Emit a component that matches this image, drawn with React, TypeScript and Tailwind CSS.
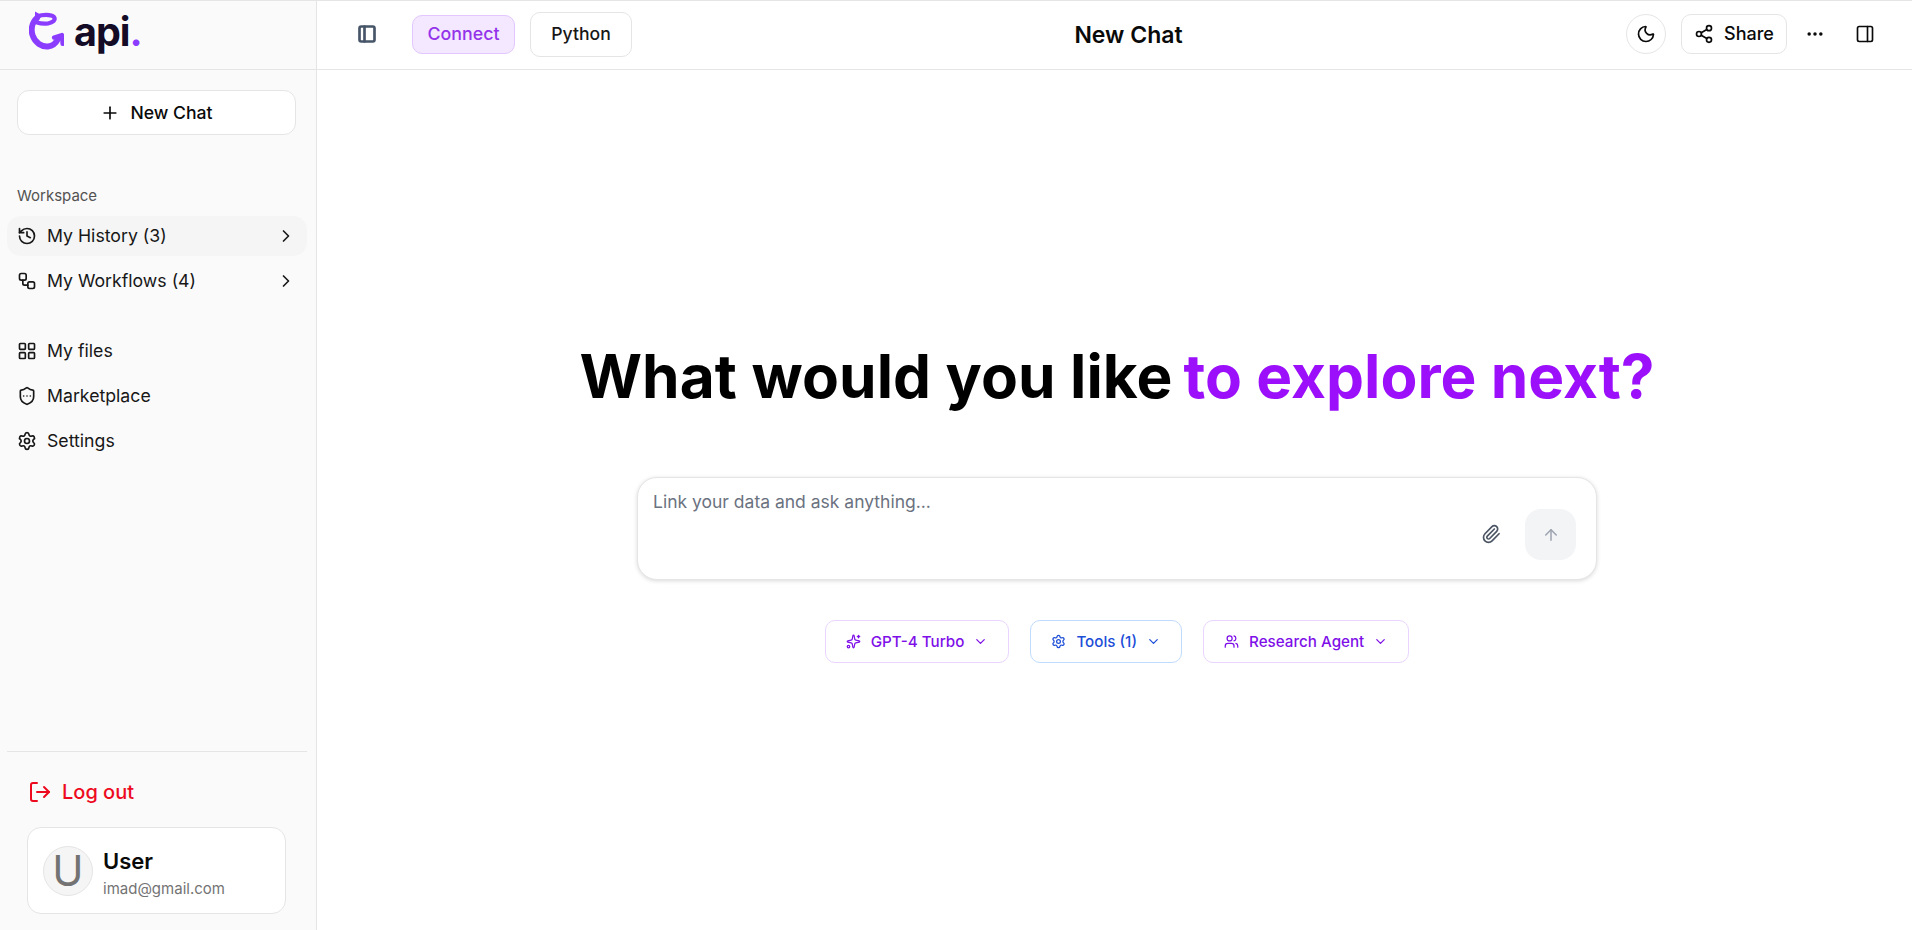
import React from "react";
import {
  History, Workflow, LayoutGrid, ShieldEllipsis, Settings, ChevronRight, ChevronDown, Plus, PanelLeft, PanelRight,
  Moon, Share2, Ellipsis, Paperclip, ArrowUp, Sparkles, Users, LogOut,
} from "lucide-react";

function Logo() {
  return (
    <svg width="35" height="40" viewBox="0 0 35 40" fill="none" className="shrink-0">
      <path d="M6 0.5 L14 5 L6 10 Z" fill="#8b3dff" />
      <path d="M8 7 C2.5 12 2 19 3.5 24 C6 32 13 36 19 35.5 C24 35 27 32 29 28" stroke="#8b3dff" strokeWidth="6" strokeLinecap="round" />
      <path d="M8 5.5 C13 3.5 22 3 25 6 C27 9 24 11.5 19 12.5 C15 13 11 12.5 8 11.5" stroke="#8b3dff" strokeWidth="4.2" strokeLinecap="round" />
      <path d="M25 26.5 L33 24 L33.5 33" stroke="#8b3dff" strokeWidth="4.2" strokeLinecap="round" strokeLinejoin="round" />
    </svg>
  );
}

function NavRow({ icon, label, chevron, active }: { icon: React.ReactNode; label: string; chevron?: boolean; active?: boolean }) {
  return (
    <div className={`flex h-10 items-center rounded-[14px] pl-[10px] pr-[11px] ${active ? "bg-[#f5f5f5]" : ""}`}>
      <span className="flex w-[20px] justify-center text-[#171717]">{icon}</span>
      <span className="ml-[10px] flex-1 text-[17.7px] leading-none text-[#171717]">{label}</span>
      {chevron && <ChevronRight size={20} strokeWidth={2} className="text-[#171717]" />}
    </div>
  );
}

function Chip({ icon, label, tone }: { icon: React.ReactNode; label: string; tone: "purple" | "blue" }) {
  const cls = tone === "blue" ? "border-[#bfdbfe] text-[#1d4ed8]" : "border-[#e9d5ff] text-[#7e0fe8]";
  return (
    <div className={`flex h-[43px] items-center rounded-[10px] border-[1.5px] bg-white pl-[20px] pr-[20px] ${cls}`}>
      {icon}
      <span className="ml-[10px] text-[15.2px] font-medium leading-none">{label}</span>
      <ChevronDown size={15} strokeWidth={2} className="ml-[9px]" />
    </div>
  );
}

export default function App() {
  return (
    <div className="flex h-[930px] w-[1912px] overflow-hidden border-t border-[#e5e5e5] bg-white font-['Inter',sans-serif] text-[#0a0a0a]">
      <aside className="flex w-[317px] shrink-0 flex-col border-r-[1.5px] border-[#e5e5e5] bg-[#fafafa]">
        <div className="flex h-[69px] shrink-0 items-start border-b border-[#e5e5e5] pl-[29px] pt-[10px]">
          <Logo />
          <span className="ml-[10px] mt-[-1px] text-[39.5px] font-bold leading-[44px] tracking-[-1px] text-[#140b26]">
            api<span className="text-[#8b3dff]">.</span>
          </span>
        </div>
        <div className="px-[17px] pt-[20px]">
          <div className="flex h-[45px] w-[279px] items-center justify-center rounded-[12px] border-[1.5px] border-[#e5e5e5] bg-white">
            <Plus size={20} strokeWidth={2} />
            <span className="ml-[10px] mt-[1px] text-[17.6px] font-medium leading-none">New Chat</span>
          </div>
        </div>
        <div className="pl-[17px] pt-[52px] text-[15px] leading-[18px] text-[#525252]">Workspace</div>
        <nav className="flex flex-col gap-[5px] pl-[7px] pr-[9px] pt-[11px]">
          <NavRow active icon={<History size={20} />} label="My History (3)" chevron />
          <NavRow icon={<Workflow size={20} />} label="My Workflows (4)" chevron />
          <div className="h-[20px]" />
          <NavRow icon={<LayoutGrid size={20} />} label="My files" />
          <NavRow icon={<ShieldEllipsis size={20} />} label="Marketplace" />
          <NavRow icon={<Settings size={20} />} label="Settings" />
        </nav>
        <div className="mt-auto pl-[7px] pr-[9px]">
          <div className="border-t-[1.5px] border-[#e5e5e5]" />
        </div>
        <div className="flex items-center pl-[28px] pt-[28px] text-[#ee0a1e]">
          <LogOut size={24} strokeWidth={2} />
          <span className="ml-[10px] text-[20px] font-medium leading-[24px]">Log out</span>
        </div>
        <div className="mx-[27px] mb-[16px] mt-[23px] flex h-[87px] w-[259px] items-center rounded-[14px] border-[1.5px] border-[#e5e5e5] bg-white pl-[15px]">
          <div className="flex h-[50px] w-[50px] items-center justify-center rounded-full border border-[#e5e5e5] bg-[#f5f5f5] text-[42px] leading-none text-[#737373]">U</div>
          <div className="ml-[10px] pt-[5px]">
            <div className="text-[22px] font-semibold leading-[28px]">User</div>
            <div className="mt-[4px] text-[15px] leading-[20px] text-[#737373]">imad@gmail.com</div>
          </div>
        </div>
      </aside>

      <main className="flex min-w-0 flex-1 flex-col">
        <header className="flex h-[69px] shrink-0 items-center border-b border-[#e5e5e5] pb-[2px] pr-[37px]">
          <PanelLeft size={20} strokeWidth={3.2} className="ml-[40px] text-[#475569]" />
          <div className="ml-[35px] flex h-[39px] w-[103px] items-center justify-center rounded-[10px] border-[1.5px] border-[#e2c7fe] bg-[#f3e8ff] text-[17.8px] font-medium leading-none text-[#9333ea]">Connect</div>
          <div className="ml-[15px] flex h-[45px] w-[102px] items-center justify-center rounded-[10px] border-[1.5px] border-[#e5e5e5] bg-white text-[17.6px] font-medium leading-none text-[#171717]">Python</div>
          <div className="mt-[2px] flex-1 pl-[11px] pr-[12px] text-center text-[23px] font-semibold leading-none">New Chat</div>
          <div className="flex h-[40px] w-[40px] items-center justify-center rounded-full border-[1.5px] border-[#e5e5e5] bg-white">
            <Moon size={20} strokeWidth={2} />
          </div>
          <div className="ml-[15px] flex h-[40px] w-[106px] items-center justify-center rounded-[10px] border-[1.5px] border-[#e5e5e5] bg-white">
            <Share2 size={20} strokeWidth={2} />
            <span className="ml-[10px] text-[18px] font-medium leading-none">Share</span>
          </div>
          <Ellipsis size={20} strokeWidth={2.2} className="ml-[18px]" />
          <PanelRight size={20} strokeWidth={2} className="ml-[30px]" />
        </header>

        <div className="flex flex-1 flex-col items-center pl-[5px] pt-[269px]">
          <h1 className="flex gap-[11px] text-[60.3px] font-bold leading-[76px] tracking-normal text-black">
            <span className="tracking-[0.1px]">What would you like</span>
            <span className="text-[#9b0ffa]">to explore next?</span>
          </h1>
          <div className="relative mt-[62px] h-[103px] w-[960px] rounded-[20px] border-[1.5px] border-[#e5e5e5] bg-white pl-[15px] pt-[12px] shadow-[0_1px_4px_rgba(0,0,0,0.15)]">
            <div className="text-[17.5px] leading-[24px] text-[#6b7280]">Link your data and ask anything...</div>
            <Paperclip size={20} strokeWidth={2} className="absolute left-[843px] top-[46px] text-[#4b5563]" />
            <div className="absolute left-[887px] top-[31px] flex h-[51px] w-[51px] items-center justify-center rounded-[16px] bg-[#f3f4f6]">
              <ArrowUp size={18} strokeWidth={2} className="text-[#9ca3af]" />
            </div>
          </div>
          <div className="mt-[40px] flex gap-[21px]">
            <Chip tone="purple" icon={<Sparkles size={15} />} label="GPT-4 Turbo" />
            <Chip tone="blue" icon={<Settings size={15} />} label="Tools (1)" />
            <Chip tone="purple" icon={<Users size={15} />} label="Research Agent" />
          </div>
        </div>
      </main>
    </div>
  );
}
